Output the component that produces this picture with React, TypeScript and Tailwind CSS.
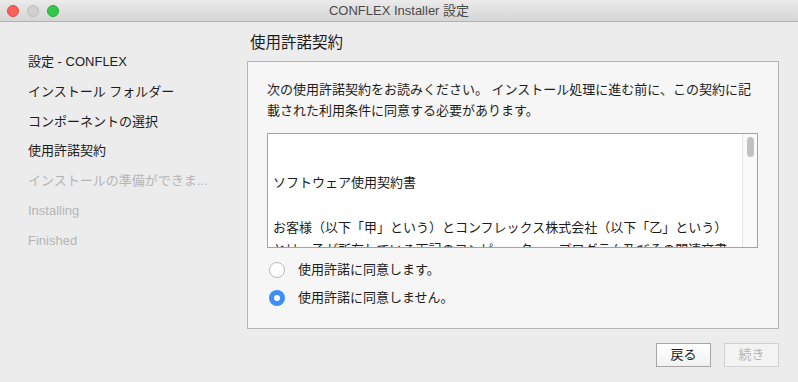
import React from "react";

const font = {
  fontFamily: '"Liberation Sans", "Noto Sans CJK JP", sans-serif',
};

export default function App() {
  return (
    <div
      className="w-[798px] h-[382px] bg-[#ececec] flex flex-col overflow-hidden text-[#1c1c1c]"
      style={font}
    >
      {/* Title bar */}
      <div className="relative h-[22px] shrink-0 bg-gradient-to-b from-[#ebebeb] to-[#d5d5d5] border-b border-[#b1b1b1] flex items-center justify-center">
        <div className="absolute left-[7px] top-[5px] flex gap-[8px]">
          <div className="w-[12px] h-[12px] rounded-full bg-[#fc605c] border border-[#de4a45]" />
          <div className="w-[12px] h-[12px] rounded-full bg-[#d0d0d0] border border-[#bdbdbd]" />
          <div className="w-[12px] h-[12px] rounded-full bg-[#34c84a] border border-[#27aa35]" />
        </div>
        <span className="text-[13px] text-[#4a4a4a] leading-none">CONFLEX Installer 設定</span>
      </div>

      {/* Body */}
      <div className="flex flex-1 min-h-0">
        {/* Sidebar */}
        <div className="w-[247px] shrink-0 pt-[25px] pl-[28px] text-[13px]">
          <div className="h-[30px] leading-[30px] -mt-[0px]">設定 - CONFLEX</div>
          <div className="h-[30px] leading-[30px]">インストール フォルダー</div>
          <div className="h-[29px] leading-[29px]">コンポーネントの選択</div>
          <div className="h-[30px] leading-[30px]">使用許諾契約</div>
          <div className="h-[30px] leading-[30px] text-[#b5b5b5]">インストールの準備ができま...</div>
          <div className="h-[30px] leading-[30px] text-[#b5b5b5]">Installing</div>
          <div className="h-[30px] leading-[30px] text-[#b5b5b5]">Finished</div>
        </div>

        {/* Main */}
        <div className="w-[532px] flex flex-col">
          <div className="pt-[11px] pl-[3px] h-[39px] text-[15.5px] leading-[20px]">使用許諾契約</div>
          <div className="h-[268px] border border-[#b4b4b4] bg-[#f6f6f6] pt-[17px] pl-[19px] pr-[20px] flex flex-col">
            <p className="text-[13px] leading-[21px] whitespace-nowrap">
              次の使用許諾契約をお読みください。 インストール処理に進む前に、この契約に記
              <br />
              載された利用条件に同意する必要があります。
            </p>
            <div className="mt-[12px] h-[115px] border border-[#a3a3a3] bg-white flex overflow-hidden">
              <div className="flex-1 pl-[5px] pt-[15px] text-[13px] leading-[22.5px] whitespace-nowrap overflow-hidden">
                <br />
                ソフトウェア使用契約書
                <br />
                <br />
                お客様（以下「甲」という）とコンフレックス株式会社（以下「乙」という）
                <br />
                とは、乙が所有している下記のコンピューター・プログラム及びその関連文書
              </div>
              <div className="w-[15px] shrink-0 bg-[#fafafa] border-l border-[#e6e6e6] pt-[3px] flex justify-center">
                <div className="w-[7px] h-[20px] rounded-full bg-[#c2c2c2]" />
              </div>
            </div>
            <div className="mt-[8px] flex flex-col text-[13px]">
              <div className="h-[28px] flex items-center">
                <div className="ml-[2px] w-[16px] h-[16px] rounded-full bg-white border border-[#b9b9b9]" />
                <span className="ml-[13px]">使用許諾に同意します。</span>
              </div>
              <div className="h-[28px] flex items-center">
                <div className="ml-[2px] w-[16px] h-[16px] rounded-full bg-[#3b8ff7] flex items-center justify-center">
                  <div className="w-[6px] h-[6px] rounded-full bg-white" />
                </div>
                <span className="ml-[13px]">使用許諾に同意しません。</span>
              </div>
            </div>
          </div>
          <div className="mt-[14px] flex justify-end gap-[13px]">
            <div className="w-[55px] h-[24px] border border-[#a6a6a6] bg-gradient-to-b from-[#ffffff] to-[#f1f1f1] flex items-center justify-center text-[13px] text-[#1a1a1a]">
              戻る
            </div>
            <div className="w-[55px] h-[24px] border border-[#d2d2d2] bg-[#f3f3f3] flex items-center justify-center text-[13px] text-[#b3b3b3]">
              続き
            </div>
          </div>
        </div>
      </div>
    </div>
  );
}
